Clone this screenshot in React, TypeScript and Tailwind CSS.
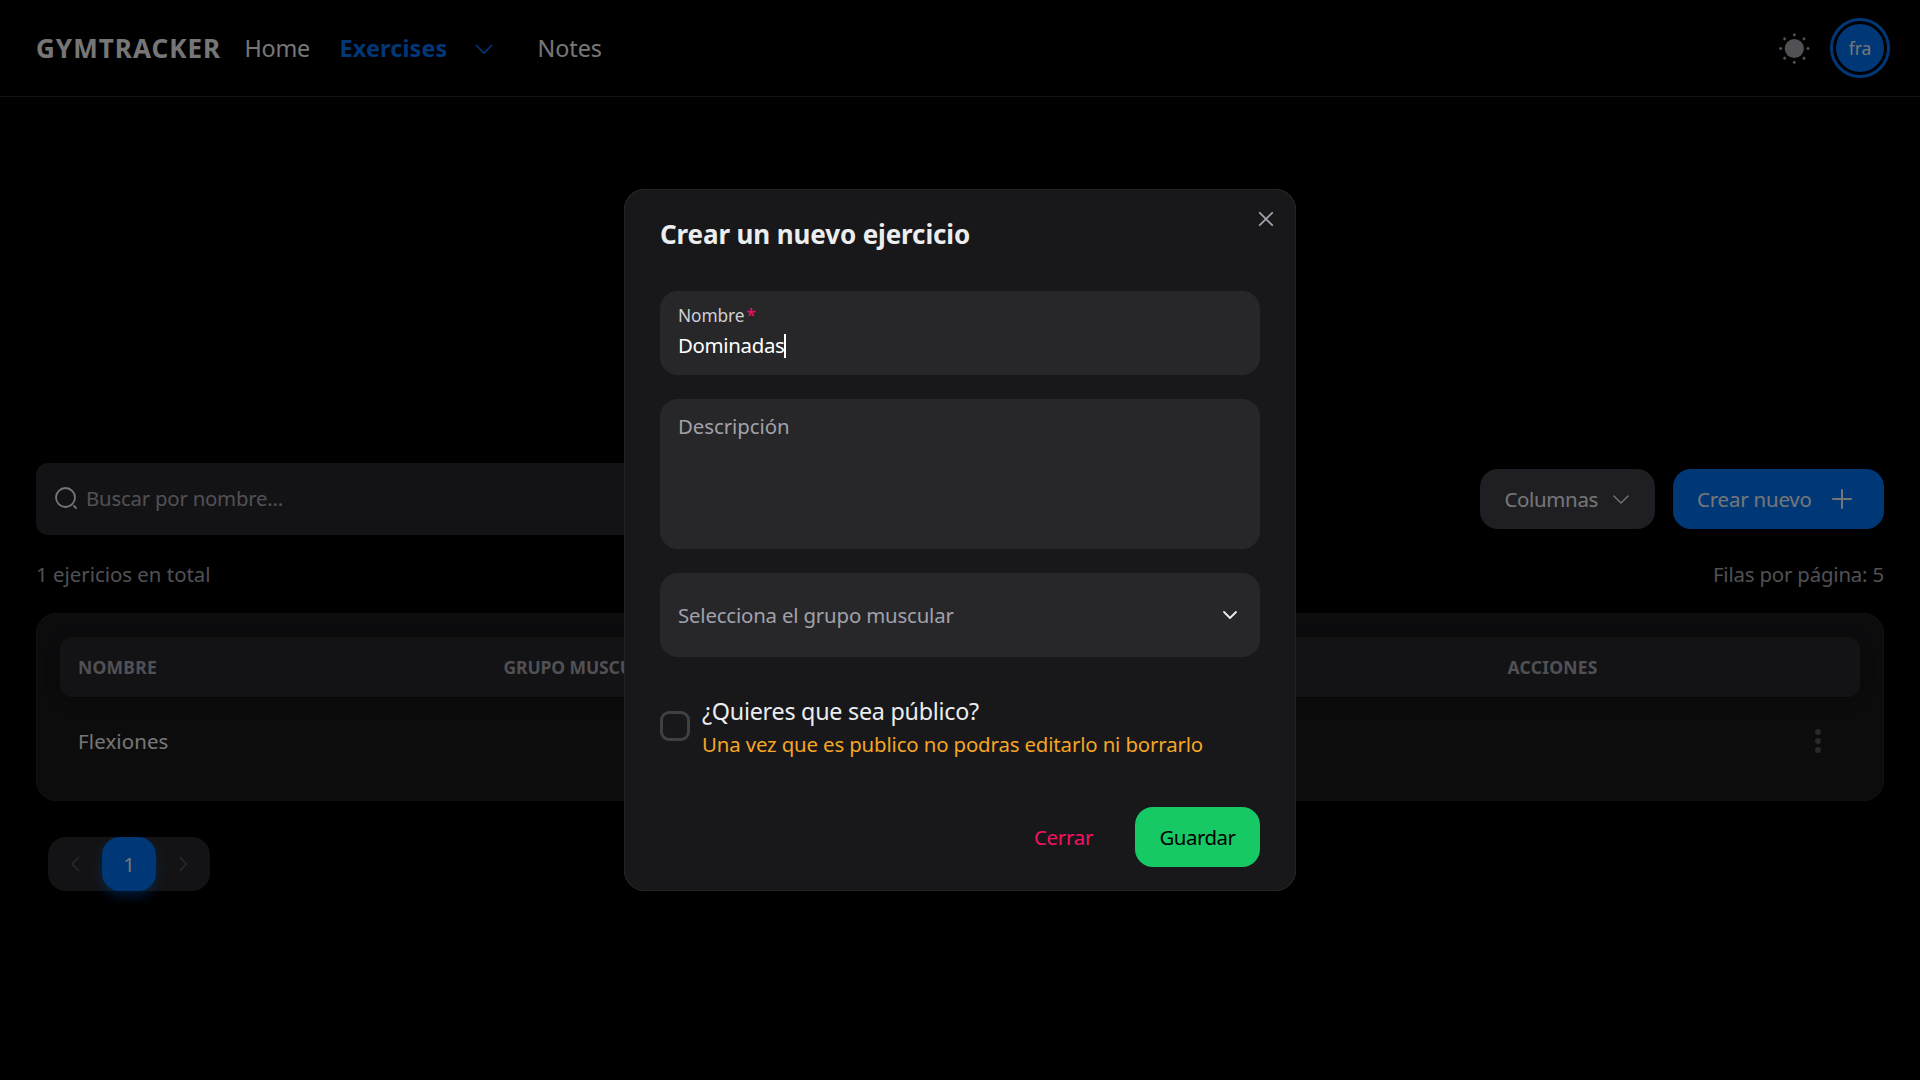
import React from "react";

function Chevron({ className, width = 1.5, d = "m6 9 6 6 6-6" }: { className: string; width?: number; d?: string }) {
  return (
    <svg viewBox="0 0 24 24" fill="none" stroke="currentColor" strokeWidth={width} strokeLinecap="round" strokeLinejoin="round" className={className}>
      <path d={d} />
    </svg>
  );
}

function SunIcon() {
  const rays = [0, 45, 90, 135, 180, 225, 270, 315];
  return (
    <svg viewBox="0 0 32 32" fill="currentColor" className="size-8 text-[#a1a1aa]">
      <circle cx="16.3" cy="16.5" r="9.6" />
      {rays.map((deg) => (
        <circle key={deg} cx="16.3" cy="2.8" r="1.5" transform={`rotate(${deg} 16.3 16.5)`} />
      ))}
    </svg>
  );
}

function SearchIcon() {
  return (
    <svg viewBox="0 0 24 24" fill="none" stroke="currentColor" strokeWidth="1.8" strokeLinecap="round" strokeLinejoin="round" className="mb-[2px] size-6 shrink-0 text-[#ecedee]">
      <circle cx="11.5" cy="11.5" r="9.5" />
      <path d="M22 22L20 20" />
    </svg>
  );
}

function Header() {
  return (
    <header className="flex h-[97px] items-center border-b border-[#262629] pr-[30px] pl-9 text-[23.3px]">
      <div className="w-[208.5px] pt-px text-[26px] font-bold tracking-[1.05px]">GYMTRACKER</div>
      <nav className="flex items-center pt-px">
        <a className="w-[95px] tracking-[-0.2px]">Home</a>
        <a className="w-[134px] font-bold tracking-[0.2px] text-[#006fee]">Exercises</a>
        <Chevron className="mr-[41px] ml-[-3px] size-[26px] text-[#006fee]" width={1.4} d="m4.8 8.5 7.2 7.3 7.2-7.3" />
        <a>Notes</a>
      </nav>
      <div className="ml-auto flex items-center gap-5">
        <SunIcon />
        <div className="flex size-[60px] items-center justify-center rounded-full border-[3px] border-[#006fee]">
          <div className="flex size-12 items-center justify-center rounded-full bg-[#006fee] pt-px text-[17.5px]">fra</div>
        </div>
      </div>
    </header>
  );
}

function Toolbar() {
  return (
    <>
      <div className="flex items-center gap-[18px]">
        <div className="flex h-[72px] w-[800px] items-center gap-2 rounded-xl bg-[#27272a] px-[18px] text-[20.4px]">
          <SearchIcon />
          <span className="pb-[2px] tracking-[-0.23px] text-[#a1a1aa]">Buscar por nombre...</span>
        </div>
        <button className="ml-auto flex h-[60px] w-[175px] items-center rounded-[18px] bg-[#3f3f46] pl-[24.5px] text-[20.4px]">
          <span className="w-[103px] text-left tracking-[-0.31px]">Columnas</span>
          <Chevron className="size-6" width={1.3} d="m5.9 9 7.1 7 7.1-7" />
        </button>
        <button className="flex h-[60px] w-[211px] items-center rounded-[18px] bg-[#006fee] pl-6 text-[20.4px]">
          <span className="w-[130px] text-left tracking-[-0.17px]">Crear nuevo</span>
          <svg viewBox="0 0 30 30" fill="none" stroke="currentColor" strokeWidth="2" strokeLinecap="round" className="size-[30px]">
            <path d="M15 6v18M6 15h18" />
          </svg>
        </button>
      </div>
      <div className="mt-6 flex h-[30px] items-center justify-between text-[20.4px] text-[#a1a1aa]">
        <span>1 ejericios en total</span>
        <span className="tracking-[-0.18px]">Filas por página: 5</span>
      </div>
    </>
  );
}

function ExerciseTable() {
  return (
    <section className="mt-6 h-[188px] rounded-[21px] bg-[#18181b] p-6 shadow-[inset_0_0_1px_rgba(255,255,255,0.3)]">
      <div className="flex h-[60px] items-center rounded-xl bg-[#27272a] pl-[18px] text-[17.5px] font-bold text-[#a1a1aa] shadow-[0_3px_15px_rgba(0,0,0,0.3)]">
        <span className="w-[425.5px] tracking-[0.25px]">NOMBRE</span>
        <span className="w-[1004px] tracking-[-0.1px]">GRUPO MUSCULAR</span>
        <span className="tracking-[0.25px]">ACCIONES</span>
      </div>
      <div className="flex h-[88px] items-center justify-between pr-[39px] pl-[18px] text-[20.4px]">
        <span className="tracking-[0.15px]">Flexiones</span>
        <svg viewBox="0 0 6 24" fill="#52525b" className="h-6 w-1.5">
          <circle cx="3" cy="3" r="2.9" />
          <circle cx="3" cy="12" r="2.9" />
          <circle cx="3" cy="21" r="2.9" />
        </svg>
      </div>
    </section>
  );
}

function Pagination() {
  return (
    <div className="mt-9 ml-3 flex h-[54px] w-[162px] rounded-[18px] bg-[#27272a] text-[20.4px]">
      <div className="flex w-[54px] items-center justify-center text-[#55555b]">
        <Chevron className="size-6" width={1.5} d="M15.5 5.5 9 12l6.500 6.500" />
      </div>
      <div className="flex w-[54px] items-center justify-center rounded-[18px] bg-[#006fee] shadow-[0_6px_12px_-1px_rgba(0,111,238,0.5)]">1</div>
      <div className="flex w-[54px] items-center justify-center text-[#55555b]">
        <Chevron className="size-6" width={1.5} d="M9 5.500l6.500 6.500L9 18.500" />
      </div>
    </div>
  );
}

function CreateDialog() {
  return (
    <div className="relative flex h-[702px] w-[672px] flex-col rounded-[21px] bg-[#18181b] px-9 shadow-[inset_0_0_1px_rgba(255,255,255,0.4)]">
      <button className="absolute top-[17px] right-[17px] p-px text-[#a1a1aa]">
        <Chevron className="size-6" width={1.9} d="M5.800 5.800l12.400 12.400M18.200 5.800l-12.400 12.400" />
      </button>
      <h2 className="mt-6 flex h-[42px] items-center text-[26px] font-bold tracking-[-0.12px]">Crear un nuevo ejercicio</h2>

      <div className="mt-9 flex h-[84px] flex-col rounded-[18px] bg-[#27272a] px-[18px] pt-[12px]">
        <div className="flex h-[26px] items-center text-[17.3px] tracking-[-0.1px] text-[#d0d0d4]">
          Nombre<span className="ml-[2px] text-[#f31260]">*</span>
        </div>
        <div className="flex h-[33px] items-center text-[20.4px] tracking-[-0.32px] text-white">
          Dominadas<span className="h-6 w-[1.5px] bg-white" />
        </div>
      </div>

      <div className="mt-6 h-[150px] rounded-[18px] bg-[#27272a] px-[18px] pt-3 text-[20.4px] leading-[30px] tracking-[-0.05px] text-[#a1a1aa]">Descripción</div>

      <div className="mt-6 flex h-[84px] items-center justify-between rounded-[18px] bg-[#27272a] pr-[18px] pl-[18px] text-[20.4px] text-[#a1a1aa]">
        <span className="tracking-[-0.18px]">Selecciona el grupo muscular</span>
        <Chevron className="size-6 text-[#ecedee]" width={1.8} />
      </div>

      <label className="mt-[36px] flex h-[66px] items-center gap-3">
        <span className="size-[30px] rounded-[9px] border-[3px] border-[#3f3f46]" />
        <span className="flex flex-col">
          <span className="text-[23.3px] leading-9 tracking-[-0.25px]">¿Quieres que sea público?</span>
          <span className="text-[20.4px] leading-[30px] tracking-[-0.14px] text-[#f5a524]">Una vez que es publico no podras editarlo ni borrarlo</span>
        </span>
      </label>

      <div className="mt-12 flex justify-end gap-[18px] text-[20.4px]">
        <button className="h-[60px] w-[107px] tracking-[-0.25px] text-[#f31260]">Cerrar</button>
        <button className="h-[60px] w-[125px] rounded-[18px] bg-[#17c964] tracking-[-0.45px] text-black">Guardar</button>
      </div>
    </div>
  );
}

export default function App() {
  return (
    <div className="relative h-[1080px] w-[1920px] overflow-hidden bg-black font-['Noto_Sans',sans-serif] text-[#ecedee]">
      <Header />
      <main className="px-9 pt-[366px]">
        <Toolbar />
        <ExerciseTable />
        <Pagination />
      </main>
      <div className="absolute inset-0 flex items-center justify-center bg-black/50">
        <CreateDialog />
      </div>
    </div>
  );
}
